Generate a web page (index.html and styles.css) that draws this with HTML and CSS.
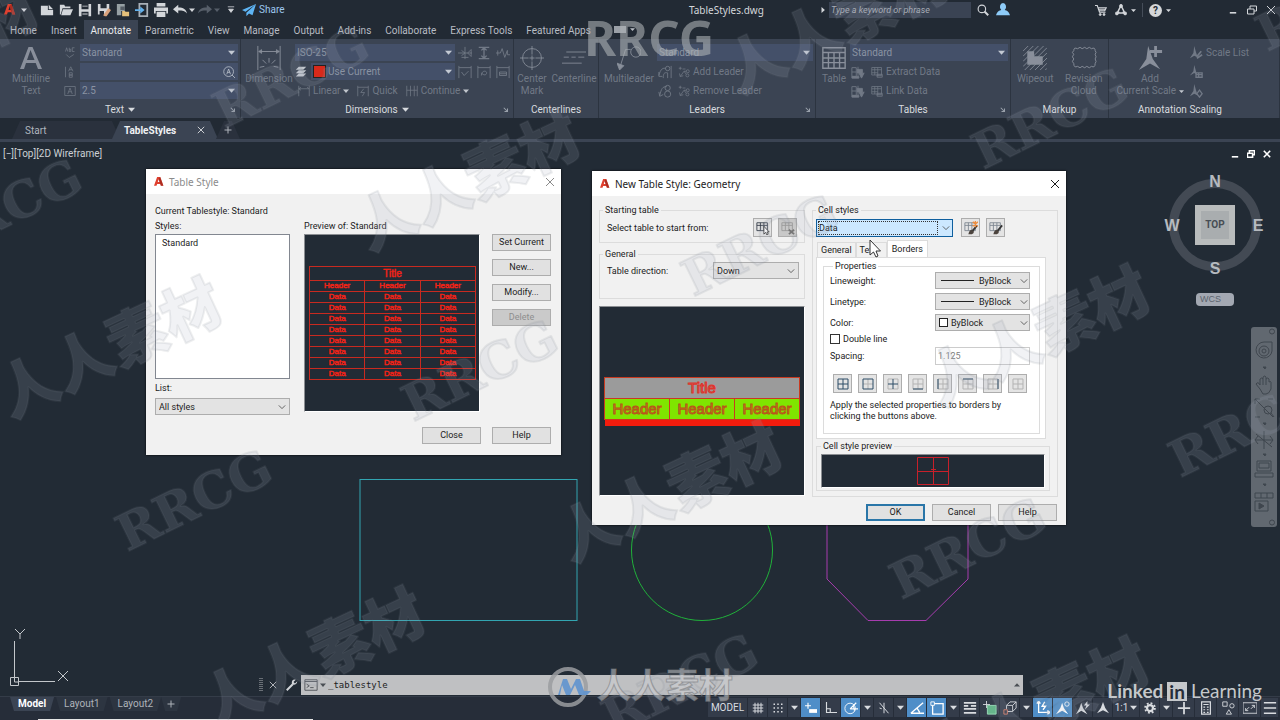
FILE: index.html
```html
<!DOCTYPE html>
<html lang="en">
<head>
<meta charset="utf-8">
<title>TableStyles.dwg</title>
<link rel="stylesheet" href="styles.css">
</head>
<body>
<svg class="sprite" aria-hidden="true">
  <symbol id="caret" viewBox="0 0 8 8"><path d="M0 2h8L4 6.500z" fill="currentColor" stroke="none"/></symbol>
  <symbol id="chev" viewBox="0 0 10 10"><path d="M1 3l4 4 4-4"/></symbol>
  <symbol id="launch" viewBox="0 0 8 8"><path d="M1 1l5 5M6 2v4H2" stroke-width="1.4"/></symbol>
  <symbol id="close" viewBox="0 0 10 10"><path d="M1 1l8 8M9 1L1 9"/></symbol>
  <symbol id="plus" viewBox="0 0 16 16"><path d="M8 1v14M1 8h14" stroke-width="2"/></symbol>
  <symbol id="alogo" viewBox="0 0 16 16"><path d="M5 0h5l5 14h-4l-1-3H5l-1 3H0zM7.500 3L6 8h3z" fill="#e0402f" stroke="none" fill-rule="evenodd"/><path d="M10 0l5 14h-4L7 3z" fill="#8e2018" stroke="none" opacity=".6"/></symbol>
  <symbol id="new" viewBox="0 0 16 16"><path d="M1 3h8v5h6v6H1zM10 2l5 5h-5z" fill="currentColor" stroke="none"/></symbol>
  <symbol id="open" viewBox="0 0 16 16"><path d="M1 2h5l1 2h6v2H4l-2 7H1zM4.500 7H16l-3 7H2.500z" fill="currentColor" stroke="none"/></symbol>
  <symbol id="save" viewBox="0 0 16 16"><path d="M1 1h14v14H1zM4 1v6h8V1zM4 10v5h8v-5zM5 3h6v1H5zM5 12h6v1H5z" fill="currentColor" fill-rule="evenodd" stroke="none"/></symbol>
  <symbol id="saveas" viewBox="0 0 16 16"><path d="M1 1h13v6l-5 6H1zM4 1v5h7V1zM3 9v4h5V9z" fill="currentColor" fill-rule="evenodd" stroke="none"/><path d="M9 15l-2-1 6-8 3 2-5 7z" fill="#d9a27c" stroke="none"/></symbol>
  <symbol id="webopen" viewBox="0 0 16 16"><path d="M1 1h9v8H6v5H1z" fill="#96a0a4" stroke="none"/><path d="M5 4h5v4H5z" fill="#555d66" stroke="none"/><path d="M7 9h3l1 1h4v5H7z" fill="#e5c07b" stroke="none"/></symbol>
  <symbol id="websave" viewBox="0 0 16 16"><path d="M5 1h9v14H5z" stroke="#a8b0b8" stroke-width="2"/><path d="M0 7h6V4l5 4-5 4V9H0z" fill="#63b1ec" stroke="none"/></symbol>
  <symbol id="print" viewBox="0 0 16 16"><path d="M3 0h10v4H3zM0 5h16v7h-2V9H2v3H0zM3 10h10v6H3z" fill="currentColor" stroke="none"/></symbol>
  <symbol id="undo" viewBox="0 0 16 16"><path d="M0 7l6-5v3c6 0 9 2 10 7-2-3-5-3.500-10-3.500V12z" fill="currentColor" stroke="none"/></symbol>
  <symbol id="redo" viewBox="0 0 16 16"><path d="M16 7l-6-5v3C4 5 1 7 0 12c2-3 5-3.500 10-3.500V12z" fill="currentColor" stroke="none"/></symbol>
  <symbol id="more" viewBox="0 0 8 10"><path d="M0 1h8M1 4h6L4 8z" fill="currentColor"/></symbol>
  <symbol id="plane" viewBox="0 0 16 16"><path d="M16 1L0 8l4 2zM16 1L5 11v4l3-3 4 2z" fill="#5eb5f5" stroke="none"/></symbol>
  <symbol id="search" viewBox="0 0 16 16"><circle cx="6.500" cy="6.500" r="5" stroke-width="1.500"/><path d="M10 10l5 5" stroke-width="2.500"/></symbol>
  <symbol id="user" viewBox="0 0 16 16"><path d="M8 0a4 4.500 0 0 1 2 8c4 1 5 3 6 6H0c1-3 2-5 6-6A4 4.500 0 0 1 8 0z" fill="#8ecbf7" stroke="none"/></symbol>
  <symbol id="cart" viewBox="0 0 16 16"><path d="M0 2h3l3 9h8M4 5h11l-2 4H5.500M5 7h9" stroke-width="1.500"/><circle cx="7" cy="14" r="1.400" fill="currentColor"/><circle cx="12" cy="14" r="1.400" fill="currentColor"/></symbol>
  <symbol id="tri" viewBox="0 0 16 16"><path d="M8 2l5 10H3zM8 2v3M3 12l3-1M13 12l-3-1" stroke-width="2"/><circle cx="8" cy="2.500" r="2" fill="currentColor"/><circle cx="2.500" cy="12.500" r="2" fill="currentColor"/><circle cx="13.500" cy="12.500" r="2" fill="currentColor"/></symbol>
  <symbol id="min" viewBox="0 0 10 10"><path d="M1 8.500h8" stroke-width="2"/></symbol>
  <symbol id="restore" viewBox="0 0 10 10"><path d="M.5 4h6.500v5H.5zM3 4V1h6.500v5H7"/></symbol>
  <symbol id="bigA" viewBox="0 0 24 24"><path d="M1 23L9.500 1h4L23 23h-4l-2.300-6H7L5 23zM8 14h7.500L11.500 4z" fill="currentColor" fill-rule="evenodd" stroke="none"/></symbol>
  <symbol id="check" viewBox="0 0 16 16"><path d="M2 6l1.500-5L5 6M7 1v5h2V3H7M14 1h-3v5h3M3 10l4 4 6-4"/></symbol>
  <symbol id="ab" viewBox="0 0 16 16"><path d="M2 1v14M6 7l3-6 3 6M7 5h4M7 9v6h4v-3H7h4V9z"/></symbol>
  <symbol id="abox" viewBox="0 0 16 16"><path d="M1 2h14v12H1zM5 12l3-8 3 8M6 9h4"/></symbol>
  <symbol id="finda" viewBox="0 0 16 16"><circle cx="7.500" cy="7.500" r="6.500"/><path d="M12 12l4 4M5 11l2.500-7 2.500 7M6 8.500h3"/></symbol>
  <symbol id="dim" viewBox="0 0 28 28"><path d="M2 1v26M26 1v26M3 7h22M3 7l3-2v4zM25 7l-3-2v4zM14 14v5M7 16l4 4M21 16l-4 4M4 24l5-1M24 24l-5-1"/></symbol>
  <symbol id="layers" viewBox="0 0 16 16"><path d="M5 1h10l-4 4H1zM5 5.500h10l-4 4H1zM5 10h10l-4 4H1z" fill="currentColor" stroke="none"/></symbol>
  <symbol id="d1" viewBox="0 0 16 16"><path d="M8 1v14M0 8h16M4 5l4 3-4 3M15 4v8l-4-4zM4 13h8"/></symbol>
  <symbol id="d2" viewBox="0 0 16 16"><path d="M2 1.500h12M2 14.500h12M8 3v10M5 5l3-3 3 3M5 11l3 3 3-3" stroke-width="1.500"/></symbol>
  <symbol id="d3" viewBox="0 0 16 16"><path d="M0 8h5l2-5 3 10 3-8v5h3M2 5v6"/></symbol>
  <symbol id="d4" viewBox="0 0 16 16"><path d="M1 1v14M15 1v14M1 3h14M4 8l3 4 5-5"/></symbol>
  <symbol id="d5" viewBox="0 0 16 16"><path d="M1 1v14M15 1v14M1 3h14M5 12c0-6 6-6 6-3s-4 3-6 0"/></symbol>
  <symbol id="d6" viewBox="0 0 16 16"><path d="M1 1v14M15 1v14M1 3h14M4 8h8v4H4zM4 10h8"/></symbol>
  <symbol id="lin" viewBox="0 0 16 16"><path d="M1 1v14M15 1v14M1 5h14M1 5l3-2M1 5l3 2M15 5l-3-2"/></symbol>
  <symbol id="cont" viewBox="0 0 16 16"><path d="M1 1v14M6 1v14M11 1v14M15 1v14M1 7h14"/></symbol>
  <symbol id="quick" viewBox="0 0 16 16"><path d="M1 1v14M15 1v14M1 3h14M9 5l-4 5h5l-3 5"/></symbol>
  <symbol id="cmark" viewBox="0 0 28 28"><circle cx="14" cy="14" r="11"/><path d="M14 0v10M14 18v10M0 14h10M18 14h10M11 14h6M14 11v6"/></symbol>
  <symbol id="cline" viewBox="0 0 28 28"><path d="M5 7h23M0 20h23M2 13h6M11 13h5M19 13h7"/></symbol>
  <symbol id="mlead" viewBox="0 0 28 28"><circle cx="22" cy="7" r="6"/><path d="M16 4H10L4 23"/><path d="M0 20l3 8 5-5z" fill="currentColor"/></symbol>
  <symbol id="ml1" viewBox="0 0 16 16"><path d="M1 12C3 4 6 3 9 4M1 8v5h4M15 1v14M6 15c0-5 1-7 5-6v6"/><circle cx="11" cy="4" r="2.500"/></symbol>
  <symbol id="ml2" viewBox="0 0 16 16"><path d="M2 13C4 5 5 3 10 3M1 9l1 5 4-2"/><circle cx="11" cy="4.500" r="3"/><circle cx="11" cy="11.500" r="3.500"/></symbol>
  <symbol id="ml3" viewBox="0 0 16 16"><path d="M1 3h4M3 1v4M3 14L8 7h3M8 7l3 4M6 4h4M2 10l1 4 4-1"/><circle cx="13" cy="7" r="2"/><circle cx="12.500" cy="12.500" r="2"/></symbol>
  <symbol id="table" viewBox="0 0 28 28"><path d="M2 3h24v22H2zM2 8h24M2 14h24M2 19h24M8 8v17M14 8v17M20 8v17" stroke-width="1.500"/></symbol>
  <symbol id="t1" viewBox="0 0 16 16"><path d="M1 3h5v10H1zM1 8h5M8 2v11" /><path d="M7 5h6v5l2-1-3 6-3-6H7zM1 13h8v2H1z" fill="currentColor"/></symbol>
  <symbol id="t2" viewBox="0 0 16 16"><path d="M1 2h13v10H1zM1 5h13M1 9h8M5 2v10M9 2v12M8 11h7v4H8zM8 13h7"/></symbol>
  <symbol id="wipe" viewBox="0 0 28 28"><path d="M0 6l6-6M0 12L12 0M0 18L18 0M0 24L24 0M2 28L28 2M8 28L28 8M14 28l14-14M20 28l8-8M26 28l2-2"/><path d="M5 6h8v6h10v10H5z" fill="#a3a9b3" stroke="none"/></symbol>
  <symbol id="cloud" viewBox="0 0 28 28"><path d="M3 6q0-4 4-2 3-3 5 0 3-3 5 0 3-3 5 0 4-2 4 2 2 2 0 4 2 3 0 5 2 3 0 5 0 5-4 3-2 3-5 0-2 3-5 0-2 3-5 0-4 2-4-3-3-2 0-5-3-2 0-5-3-2 0-4z"/></symbol>
  <symbol id="scale" viewBox="0 0 28 28"><path d="M12 1l5 14 8 11-11-6-12 7 8-12z" fill="currentColor" stroke="none"/><path d="M20 1v12M14 7h13" stroke-width="3"/></symbol>
  <symbol id="sc" viewBox="0 0 16 16"><path d="M6 0l2 7 2 6-4-2-5 3 4-6z" fill="currentColor" stroke="none"/><path d="M9 12l5-6M9 14l6-4" stroke-width="2"/></symbol>
  <symbol id="sc2" viewBox="0 0 16 16"><path d="M6 0l2 7 1 4-3-2-5 3 4-5z" fill="currentColor" stroke="none"/><path d="M8 9h7v5H8zM8 11h7M11 9v5" stroke-width="1.500"/></symbol>
  <symbol id="sc3" viewBox="0 0 16 16"><path d="M6 0l2 7 2 6-4-2-5 3 4-6z" fill="currentColor" stroke="none"/><path d="M12 7l3 4-3 4-3-4z" stroke-width="1.500"/></symbol>
  <symbol id="person" viewBox="0 0 16 16"><path d="M8 0l3 8 5 7-8-4-8 4 5-7z" fill="currentColor" stroke="none"/></symbol>
  <symbol id="personc" viewBox="0 0 16 16"><path d="M7 2l2 6 5 7-7-4-7 4 5-7z" fill="currentColor" stroke="none"/><circle cx="12.500" cy="3.500" r="2.500"/></symbol>
  <symbol id="personb" viewBox="0 0 16 16"><path d="M6 2l2 6 5 7-7-4-6 4 4-7zM13 0L9 5h3l-2 5 6-6h-3z" fill="currentColor" stroke="none"/></symbol>
  <symbol id="grid" viewBox="0 0 16 16"><path d="M4 1v14M8 1v14M12 1v14M1 4h14M1 8h14M1 12h14" stroke-width="1.300"/></symbol>
  <symbol id="dots" viewBox="0 0 16 16"><path d="M2 3h12M2 8h12M2 13h12" stroke-width="2" stroke-dasharray="2 3"/></symbol>
  <symbol id="dyn" viewBox="0 0 16 16"><path d="M4 1v8M0 5h8" stroke-width="1.500"/><path d="M6 10h10v4H6z" fill="currentColor"/></symbol>
  <symbol id="ortho" viewBox="0 0 16 16"><path d="M2 0v14h14M2 9h5v5" stroke-width="1.500"/></symbol>
  <symbol id="polar" viewBox="0 0 16 16"><circle cx="7" cy="8.500" r="6"/><path d="M7 9h9M7 9l7-7M11 6l1 5" stroke-width="1.400"/></symbol>
  <symbol id="iso" viewBox="0 0 16 16"><path d="M2 1l12 14M8 1v14M2 8l3 1" stroke-width="1.300"/></symbol>
  <symbol id="track" viewBox="0 0 16 16"><path d="M1 14L15 2M1 14h15M8 8l3 5" stroke-width="1.600"/></symbol>
  <symbol id="osnap" viewBox="0 0 16 16"><path d="M3 3h12v12H3z" stroke-width="1.500"/><path d="M1 1h4v4H1z" fill="#4f8ec8"/></symbol>
  <symbol id="lw" viewBox="0 0 16 16"><path d="M1 2h14M1 5.500h5M9 5.500h6M1 9h14M1 13.500h14" stroke-width="2"/></symbol>
  <symbol id="trans" viewBox="0 0 16 16"><path d="M4 0v8M0 4h8"/><path d="M5 5h10v10H5z" fill="#66b58b" stroke="#9fe0bd"/></symbol>
  <symbol id="cube" viewBox="0 0 16 16"><path d="M4 5l4-4h7v7l-4 4H5M4 5h7v7M11 5l4-4M4 5v4"/><path d="M1 10h4v5H1z" stroke="#e08068"/></symbol>
  <symbol id="ucs" viewBox="0 0 16 16"><path d="M3 1v12h13M1 3l2-3 2 3M13 11l3 2-3 2M10 1L7 6h4l-3 4" stroke-width="1.500"/></symbol>
  <symbol id="gear" viewBox="0 0 16 16"><circle cx="8" cy="8" r="4" stroke-width="3"/><circle cx="8" cy="8" r="6.500" stroke-width="2.500" stroke-dasharray="2.500 2.600"/></symbol>
  <symbol id="calc" viewBox="0 0 16 16"><path d="M3 1h10v14H3zM5 4h6M5 7h2M9 7h2M5 10h2M9 10h2M5 13h2M9 13h2" stroke-width="1.400"/></symbol>
  <symbol id="shapes" viewBox="0 0 16 16"><path d="M2 1h5v5H2zM6 15l3-5 3 5z"/><circle cx="12.500" cy="5.500" r="2.500"/></symbol>
  <symbol id="full" viewBox="0 0 16 16"><path d="M0 2h16v12H0zM3 11l4-4M3 8v3h3M13 5L9 9M13 8V5h-3"/></symbol>
  <symbol id="menu" viewBox="0 0 16 16"><path d="M1 2h14M1 8h14M1 14h14" stroke-width="1.600"/></symbol>
  <symbol id="wrench" viewBox="0 0 16 16"><path d="M1 15l8-8" stroke-width="2.500"/><path d="M13 1c-4-1-6 2-5 6 3 2 7 0 7-4l-3 3-2-2z" fill="currentColor" stroke="none"/></symbol>
  <symbol id="cmd" viewBox="0 0 16 14"><path d="M1 1h14v12H1zM1 3h14M3 6l3 2-3 2M7 10h4"/></symbol>
  <symbol id="pick" viewBox="0 0 16 16"><path d="M1 2h12v9H1zM1 5h12M5 2v9M9 2v9" stroke="#333c48"/><path d="M9 6v9l2-2 1.500 3 1.500-1-1.500-2.500H15z" fill="#fff" stroke="#333"/></symbol>
  <symbol id="unpick" viewBox="0 0 16 16"><path d="M1 2h12v9H1zM1 5h12M5 2v9M9 2v9" stroke="#999"/><path d="M9 10l6 5M15 10l-6 5" stroke="#777" stroke-width="2"/></symbol>
  <symbol id="brush" viewBox="0 0 16 16"><path d="M1 2h12v9H1zM1 5h12M5 2v9M9 2v9" stroke="#7b858f"/><path d="M5 15c1-5 4-6 6-4 1 3-2 5-6 4z" fill="#4c443e" stroke="none"/><path d="M10 11l5-6" stroke="#333" stroke-width="2"/></symbol>
  <symbol id="star" viewBox="0 0 16 16"><path d="M13 0v7M10 1l6 5M16 1l-6 5" stroke="#ef8d3c" stroke-width="1.500"/></symbol>
</svg>

<header class="titlebar">
  <div class="quick">
    <button class="ib app" aria-label="Application menu"><svg class="i12"><use href="#alogo"/></svg><svg class="i6"><use href="#caret"/></svg></button>
    <button class="ib" aria-label="New"><svg class="i14"><use href="#new"/></svg></button>
    <button class="ib" aria-label="Open"><svg class="i14"><use href="#open"/></svg></button>
    <button class="ib" aria-label="Save"><svg class="i14"><use href="#save"/></svg></button>
    <button class="ib" aria-label="Save as"><svg class="i14"><use href="#saveas"/></svg></button>
    <button class="ib" aria-label="Open from web"><svg class="i14"><use href="#webopen"/></svg></button>
    <button class="ib" aria-label="Save to web"><svg class="i14"><use href="#websave"/></svg></button>
    <button class="ib" aria-label="Plot"><svg class="i14"><use href="#print"/></svg></button>
    <button class="ib" aria-label="Undo"><svg class="i14"><use href="#undo"/></svg></button>
    <svg class="i6"><use href="#caret"/></svg>
    <button class="ib dim" aria-label="Redo"><svg class="i14"><use href="#redo"/></svg></button>
    <svg class="i6 dim"><use href="#caret"/></svg>
    <button class="ib small" aria-label="Customize"><svg class="i8"><use href="#more"/></svg></button>
    <a class="share" href="#"><svg class="i14"><use href="#plane"/></svg>Share</a>
  </div>
  <h1 class="doc">TableStyles.dwg</h1>
  <div class="info">
    <svg class="i6 right"><use href="#caret"/></svg>
    <input class="keyword" type="text" placeholder="Type a keyword or phrase" aria-label="Search">
    <button class="ib" aria-label="Search"><svg class="i12"><use href="#search"/></svg></button>
    <button class="ib" aria-label="Sign in"><svg class="i14"><use href="#user"/></svg></button>
    <span class="grow"></span>
    <button class="ib" aria-label="Store"><svg class="i12"><use href="#cart"/></svg></button>
    <button class="ib" aria-label="Apps"><svg class="i12"><use href="#tri"/></svg></button>
    <svg class="i5"><use href="#caret"/></svg>
    <span class="bar"></span>
    <button class="help" aria-label="Help">?</button>
    <svg class="i5"><use href="#caret"/></svg>
    <div class="winctl"><button class="ib" aria-label="Minimize"><svg class="i8"><use href="#min"/></svg></button><button class="ib" aria-label="Restore"><svg class="i10"><use href="#restore"/></svg></button><button class="ib" aria-label="Close"><svg class="i10"><use href="#close"/></svg></button></div>
  </div>
</header>

<nav class="tabs">
  <a href="#">Home</a><a href="#">Insert</a><a href="#" class="on">Annotate</a><a href="#">Parametric</a><a href="#">View</a><a href="#">Manage</a><a href="#">Output</a><a href="#">Add-ins</a><a href="#">Collaborate</a><a href="#">Express Tools</a><a href="#">Featured Apps</a><span class="toggle"></span><svg class="i5"><use href="#caret"/></svg>
</nav>

<section class="ribbon">
  <div class="panel">
    <div class="pbody p-text">
      <button class="big"><svg class="i24"><use href="#bigA"/></svg><span>Multiline<br>Text</span></button>
      <div class="stack narrow"><svg class="i12"><use href="#check"/></svg><svg class="i12"><use href="#ab"/></svg><svg class="i12"><use href="#abox"/></svg></div>
      <div class="stack">
        <span class="combo"><select aria-label="Text style"><option>Standard</option></select><svg class="i7"><use href="#caret"/></svg></span>
        <span class="combo"><input type="text" aria-label="Find text"><svg class="i12"><use href="#finda"/></svg></span>
        <span class="combo"><select aria-label="Text height"><option>2.5</option></select><svg class="i7"><use href="#caret"/></svg></span>
      </div>
    </div>
    <div class="ptitle"><span>Text <svg class="i7"><use href="#caret"/></svg></span><svg class="i6 la"><use href="#launch"/></svg></div>
  </div>
  <div class="panel">
    <div class="pbody p-dim">
      <button class="big"><svg class="i28"><use href="#dim"/></svg><span>Dimension</span></button>
      <div class="dimgrid">
        <span class="combo"><select aria-label="Dimension style"><option>ISO-25</option></select><svg class="i7"><use href="#caret"/></svg></span>
        <div class="tri"><svg class="i14"><use href="#d1"/></svg><svg class="i14"><use href="#d2"/></svg><svg class="i14"><use href="#d3"/></svg></div>
        <div class="layer"><svg class="i12 lit"><use href="#layers"/></svg><span class="combo grow"><i class="swatch"></i><select aria-label="Layer"><option>Use Current</option></select><svg class="i7"><use href="#caret"/></svg></span></div>
        <div class="tri"><svg class="i14"><use href="#d4"/></svg><svg class="i14"><use href="#d5"/></svg><svg class="i14"><use href="#d6"/></svg></div>
        <div class="cmds wide"><button class="cmd"><svg class="i12"><use href="#lin"/></svg>Linear <svg class="i6 lit"><use href="#caret"/></svg></button><button class="cmd"><svg class="i12"><use href="#quick"/></svg>Quick</button><button class="cmd"><svg class="i12"><use href="#cont"/></svg>Continue <svg class="i6 lit"><use href="#caret"/></svg></button></div>
      </div>
    </div>
    <div class="ptitle"><span>Dimensions <svg class="i7"><use href="#caret"/></svg></span><svg class="i6 la"><use href="#launch"/></svg></div>
  </div>
  <div class="panel">
    <div class="pbody p-pair tight">
      <button class="big"><svg class="i24"><use href="#cmark"/></svg><span>Center<br>Mark</span></button>
      <button class="big"><svg class="i24"><use href="#cline"/></svg><span>Centerline</span></button>
    </div>
    <div class="ptitle"><span>Centerlines</span></div>
  </div>
  <div class="panel">
    <div class="pbody p-lead">
      <button class="big"><svg class="i24"><use href="#mlead"/></svg><span>Multileader</span></button>
      <div class="stack">
        <span class="combo"><select aria-label="Leader style"><option>Standard</option></select><svg class="i7"><use href="#caret"/></svg></span>
        <div class="cmds"><svg class="i14"><use href="#ml1"/></svg><button class="cmd"><svg class="i12"><use href="#ml3"/></svg>Add Leader</button></div>
        <div class="cmds"><svg class="i14"><use href="#ml2"/></svg><button class="cmd"><svg class="i12"><use href="#ml3"/></svg>Remove Leader</button></div>
      </div>
    </div>
    <div class="ptitle"><span>Leaders</span><svg class="i6 la"><use href="#launch"/></svg></div>
  </div>
  <div class="panel">
    <div class="pbody p-tab">
      <button class="big"><svg class="i28"><use href="#table"/></svg><span>Table</span></button>
      <div class="stack">
        <span class="combo"><select aria-label="Table style"><option>Standard</option></select><svg class="i7"><use href="#caret"/></svg></span>
        <div class="cmds"><svg class="i14"><use href="#t1"/></svg><button class="cmd"><svg class="i12"><use href="#t2"/></svg>Extract Data</button></div>
        <div class="cmds"><svg class="i14"><use href="#t1"/></svg><button class="cmd"><svg class="i12"><use href="#t2"/></svg>Link Data</button></div>
      </div>
    </div>
    <div class="ptitle"><span>Tables</span><svg class="i6 la"><use href="#launch"/></svg></div>
  </div>
  <div class="panel">
    <div class="pbody p-pair">
      <button class="big"><svg class="i24"><use href="#wipe"/></svg><span>Wipeout</span></button>
      <button class="big"><svg class="i28"><use href="#cloud"/></svg><span>Revision<br>Cloud</span></button>
    </div>
    <div class="ptitle"><span>Markup</span></div>
  </div>
  <div class="panel">
    <div class="pbody p-scale">
      <button class="big"><svg class="i28"><use href="#scale"/></svg><span>Add<br>Current Scale <svg class="i5 lit"><use href="#caret"/></svg></span></button>
      <div class="stack">
        <button class="cmd"><svg class="i14"><use href="#sc"/></svg>Scale List</button>
        <button class="cmd" aria-label="Delete scales"><svg class="i14"><use href="#sc2"/></svg></button>
        <button class="cmd" aria-label="Sync scales"><svg class="i14"><use href="#sc3"/></svg></button>
      </div>
    </div>
    <div class="ptitle shift"><span>Annotation Scaling</span></div>
  </div>
</section>

<nav class="files">
  <a href="#" class="file">Start</a>
  <a href="#" class="file on">TableStyles <svg class="i8"><use href="#close"/></svg></a>
  <button class="file add" aria-label="New drawing"><svg class="i8"><use href="#plus"/></svg></button>
</nav>

<main class="canvas">
  <svg class="drawing" viewBox="0 142 1280 554" aria-hidden="true">
    <rect x="360" y="479.500" width="217" height="141" stroke="#32a5b1"/>
    <circle cx="702" cy="550" r="70.500" stroke="#20b13a"/>
    <path d="M868 479h58l42 42v58l-42 41.500h-58L827 579v-58z" stroke="#a63cae"/>
    <path d="M14.500 641v36M18 681.500h37M10.500 677.500h8v8h-8zM14.500 677v5h4M15 629l5 5 5-5M20 634v5M58 671l10 10M68 671l-10 10" stroke="#c3c7cb"/>
  </svg>
  <div class="viewrow"><span>[−][Top][2D Wireframe]</span><div class="winctl"><button class="ib" aria-label="Minimize view"><svg class="i8"><use href="#min"/></svg></button><button class="ib" aria-label="Restore view"><svg class="i8"><use href="#restore"/></svg></button><button class="ib" aria-label="Close view"><svg class="i8"><use href="#close"/></svg></button></div></div>

  <div class="viewcube"><b class="n">N</b><b class="w">W</b><button class="top">TOP</button><b class="e">E</b><b class="s">S</b></div>
  <button class="wcs">WCS</button>
  <svg class="navbar" viewBox="0 0 26 200" aria-hidden="true">
    <rect width="26" height="200" rx="3" fill="#616870" stroke="none"/>
    <circle cx="21" cy="4.500" r="2.500"/><circle cx="21" cy="195.500" r="2.500"/>
    <path d="M13 15h8v9a8 8 0 1 1-8-9z"/><circle cx="13" cy="24" r="5"/><circle cx="13" cy="24" r="2"/>
    <path d="M9 62l-4-5q2-3 4 1v-6q2-2 3 0v-2q2-2 3 0v2q2-2 3 0v3q2-1 2 0v7q-2 5-5 5h-3zM12 52v6M15 52v6M4 72l18 18M4 72h5M4 72v5M22 72h-5M4 90h5"/><circle cx="17" cy="83" r="4"/><path d="M20 86l3 4M13 104v18M4 113h18M7 109l-3 4 3 4M19 109l3 4-3 4M5 107l16 13M6 134h14v10H6zM8 136h10v5H8zM4 146h18v4H4zM4 166h18v5H4zM10 166v5M16 166v5M4 174h13v10H4z"/>
    <path d="M8 176l5 3-5 3zM12 40h3l-1 2zM12 96h3l-1 2zM12 127h3l-1 2zM12 157h3l-1 2z" fill="#3f464e"/>
  </svg>

  <section class="dialog styles" aria-labelledby="d1t">
    <header class="dtitle muted"><svg class="i12"><use href="#alogo"/></svg><h2 id="d1t">Table Style</h2><button class="ib" aria-label="Close dialog"><svg class="i10"><use href="#close"/></svg></button></header>
    <div class="sbody">
      <p class="line full">Current Tablestyle: Standard</p>
      <p class="line">Styles:</p><p class="line span2">Preview of: Standard</p>
      <div class="leftcol">
        <ul class="listbox"><li>Standard</li></ul>
        <label class="line" for="list">List:</label>
        <span class="sel"><select id="list"><option>All styles</option></select><svg class="i8"><use href="#chev"/></svg></span>
      </div>
      <div class="preview">
        <table class="mini">
          <tr><th class="t" colspan="3">Title</th></tr>
          <tr><th>Header</th><th>Header</th><th>Header</th></tr>
          <tr><td>Data</td><td>Data</td><td>Data</td></tr><tr><td>Data</td><td>Data</td><td>Data</td></tr>
          <tr><td>Data</td><td>Data</td><td>Data</td></tr><tr><td>Data</td><td>Data</td><td>Data</td></tr>
          <tr><td>Data</td><td>Data</td><td>Data</td></tr><tr><td>Data</td><td>Data</td><td>Data</td></tr>
          <tr><td>Data</td><td>Data</td><td>Data</td></tr><tr><td>Data</td><td>Data</td><td>Data</td></tr>
        </table>
      </div>
      <div class="btncol"><button class="btn">Set Current</button><button class="btn">New...</button><button class="btn">Modify...</button><button class="btn" disabled>Delete</button></div>
      <div class="sfoot"><button class="btn">Close</button><button class="btn">Help</button></div>
    </div>
  </section>

  <section class="dialog newstyle" aria-labelledby="d2t">
    <header class="dtitle"><svg class="i12"><use href="#alogo"/></svg><h2 id="d2t">New Table Style: Geometry</h2><button class="ib" aria-label="Close dialog"><svg class="i10"><use href="#close"/></svg></button></header>
    <div class="nbody">
      <div class="ncol">
        <fieldset class="starting"><legend>Starting table</legend>
          <div class="row"><span class="grow">Select table to start from:</span><button class="sq" aria-label="Select table"><svg class="i14"><use href="#pick"/></svg></button><button class="sq off" disabled aria-label="Remove table"><svg class="i14"><use href="#unpick"/></svg></button></div>
        </fieldset>
        <fieldset class="general"><legend>General</legend>
          <div class="row"><label class="grow" for="dir">Table direction:</label><span class="sel dir"><select id="dir"><option>Down</option></select><svg class="i8"><use href="#chev"/></svg></span></div>
        </fieldset>
        <div class="preview">
          <table class="maxi">
            <tr><th class="t" colspan="3">Title</th></tr>
            <tr><th>Header</th><th>Header</th><th>Header</th></tr>
            <tr><td colspan="3"></td></tr>
          </table>
        </div>
      </div>
      <fieldset class="cells"><legend>Cell styles</legend>
        <div class="row pickrow"><span class="sel focus"><select aria-label="Cell style"><option>Data</option></select><svg class="i8"><use href="#chev"/></svg></span><button class="sq" aria-label="New cell style"><svg class="i14"><use href="#brush"/><use href="#star"/></svg></button><button class="sq" aria-label="Manage cell styles"><svg class="i14"><use href="#brush"/></svg></button></div>
        <div class="dtabs" role="tablist"><button role="tab">General</button><button role="tab">Text</button><button role="tab" class="on" aria-selected="true">Borders</button></div>
        <div class="page">
          <fieldset class="props"><legend>Properties</legend>
            <div class="form">
              <label for="lw1">Lineweight:</label><span class="sel"><i class="sample"></i><select id="lw1"><option>ByBlock</option></select><svg class="i8"><use href="#chev"/></svg></span>
              <label for="lt1">Linetype:</label><span class="sel"><i class="sample"></i><select id="lt1"><option>ByBlock</option></select><svg class="i8"><use href="#chev"/></svg></span>
              <label for="co1">Color:</label><span class="sel"><i class="chip"></i><select id="co1"><option>ByBlock</option></select><svg class="i8"><use href="#chev"/></svg></span>
            </div>
            <label class="checkrow"><input type="checkbox">Double line</label>
            <div class="form"><label for="sp">Spacing:</label><input id="sp" class="num" type="text" value="1.125" disabled></div>
            <div class="borders">
              <button class="sq" aria-label="All borders"><svg class="b" viewBox="0 0 12 12"><path d="M1 1h10v10H1zM6 1v10M1 6h10" stroke="#2d4c66"/></svg></button>
              <button class="sq" aria-label="Outside borders"><svg class="b" viewBox="0 0 12 12"><path class="g" d="M6 1v10M1 6h10"/><path d="M1 1h10v10H1z" stroke="#2d4c66"/></svg></button>
              <button class="sq" aria-label="Inside borders"><svg class="b" viewBox="0 0 12 12"><path class="g" d="M1 1h10v10H1z"/><path d="M6 1v10M1 6h10" stroke="#2d4c66"/></svg></button>
              <button class="sq" aria-label="Bottom border"><svg class="b" viewBox="0 0 12 12"><path class="g" d="M1 1h10v10H1zM6 1v10M1 6h10"/><path d="M1 11h10" stroke="#2d4c66"/></svg></button>
              <button class="sq" aria-label="Left border"><svg class="b" viewBox="0 0 12 12"><path class="g" d="M1 1h10v10H1zM6 1v10M1 6h10"/><path d="M1 1v10" stroke="#2d4c66"/></svg></button>
              <button class="sq" aria-label="Top border"><svg class="b" viewBox="0 0 12 12"><path class="g" d="M1 1h10v10H1zM6 1v10M1 6h10"/><path d="M1 1h10" stroke="#2d4c66"/></svg></button>
              <button class="sq" aria-label="Right border"><svg class="b" viewBox="0 0 12 12"><path class="g" d="M1 1h10v10H1zM6 1v10M1 6h10"/><path d="M11 1v10" stroke="#2d4c66"/></svg></button>
              <button class="sq" aria-label="No borders"><svg class="b" viewBox="0 0 12 12"><path class="g" d="M1 1h10v10H1zM6 1v10M1 6h10"/></svg></button>
            </div>
            <p class="hint">Apply the selected properties to borders by clicking the buttons above.</p>
          </fieldset>
        </div>
        <fieldset class="cprev"><legend>Cell style preview</legend><div class="preview"><svg class="cellpic" viewBox="0 0 32 28"><path d="M.5.5h31v27H.5zM16.500 1v26M1 14.500h30M14 12.500h5" stroke="#c8202a"/></svg></div></fieldset>
      </fieldset>
    </div>
    <footer class="nfoot"><button class="btn primary">OK</button><button class="btn">Cancel</button><button class="btn">Help</button></footer>
  </section>

  <div class="cmdline">
    <svg class="grip" viewBox="0 0 4 14"><path d="M1 0v14M3 0v14" stroke-dasharray="1 1"/></svg>
    <button class="ib" aria-label="Close command line"><svg class="i8"><use href="#close"/></svg></button>
    <button class="ib" aria-label="Customize command line"><svg class="i12"><use href="#wrench"/></svg></button>
    <label class="cmdbox"><svg class="i14"><use href="#cmd"/></svg><svg class="i6"><use href="#caret"/></svg><input type="text" value="_tablestyle" aria-label="Command"><svg class="i6 up"><use href="#caret"/></svg></label>
  </div>
</main>

<footer class="status">
  <nav class="layouts"><a href="#" class="on">Model</a><a href="#">Layout1</a><a href="#">Layout2</a><a href="#" class="add" aria-label="New layout"><svg class="i8"><use href="#plus"/></svg></a></nav>
  <div class="tools">
    <button class="model">MODEL</button>
    <button aria-label="Grid"><svg class="i12"><use href="#grid"/></svg></button>
    <button aria-label="Snap"><svg class="i12"><use href="#dots"/></svg></button>
    <button class="c" aria-label="Snap options"><svg class="i7"><use href="#caret"/></svg></button>
    <button class="act" aria-label="Dynamic input"><svg class="i12"><use href="#dyn"/></svg></button>
    <button aria-label="Ortho"><svg class="i12"><use href="#ortho"/></svg></button>
    <button class="act" aria-label="Polar"><svg class="i14"><use href="#polar"/></svg></button>
    <button class="c" aria-label="Polar options"><svg class="i7"><use href="#caret"/></svg></button>
    <button aria-label="Isodraft"><svg class="i12"><use href="#iso"/></svg></button>
    <button class="c" aria-label="Isodraft options"><svg class="i7"><use href="#caret"/></svg></button>
    <button class="act" aria-label="Tracking"><svg class="i14"><use href="#track"/></svg></button>
    <button class="act" aria-label="Object snap"><svg class="i14"><use href="#osnap"/></svg></button>
    <button class="c" aria-label="Object snap options"><svg class="i7"><use href="#caret"/></svg></button>
    <button aria-label="Lineweight"><svg class="i14"><use href="#lw"/></svg></button>
    <button aria-label="Transparency"><svg class="i14"><use href="#trans"/></svg></button>
    <button aria-label="3D snap"><svg class="i14"><use href="#cube"/></svg></button>
    <button class="c" aria-label="3D snap options"><svg class="i7"><use href="#caret"/></svg></button>
    <button class="act" aria-label="Dynamic UCS"><svg class="i14"><use href="#ucs"/></svg></button>
    <button class="act" aria-label="Annotation visibility"><svg class="i14"><use href="#personc"/></svg></button>
    <button aria-label="Autoscale"><svg class="i14"><use href="#personb"/></svg></button>
    <button aria-label="Annotation scale"><svg class="i12"><use href="#person"/></svg></button>
    <button class="ratio">1:1<svg class="i7"><use href="#caret"/></svg></button>
    <button aria-label="Workspace"><svg class="i12"><use href="#gear"/></svg></button>
    <button class="c" aria-label="Workspace options"><svg class="i7"><use href="#caret"/></svg></button>
    <button class="w" aria-label="Annotation monitor"><svg class="i14"><use href="#plus"/></svg></button>
    <button class="w" aria-label="Quick properties"><svg class="i14"><use href="#calc"/></svg></button>
    <button class="w" aria-label="Isolate objects"><svg class="i14"><use href="#shapes"/></svg></button>
    <button class="w" aria-label="Clean screen"><svg class="i14"><use href="#full"/></svg></button>
    <button class="m" aria-label="Customize status bar"><svg class="i14"><use href="#menu"/></svg></button>
  </div>
  <i class="strip"></i>
</footer>

<svg class="marks" viewBox="0 0 1280 720" aria-hidden="true">
  <g class="slab">
    <text transform="translate(291 77) rotate(-26)">RRCG</text>
    <text transform="translate(1050 118) rotate(-26)">RRCG</text>
    <text transform="translate(4 209) rotate(-26)">RRCG</text>
    <text transform="translate(760 245) rotate(-26)">RRCG</text>
    <text transform="translate(480 370) rotate(-26)">RRCG</text>
    <text transform="translate(194 500) rotate(-26)">RRCG</text>
    <text transform="translate(968 548) rotate(-26)">RRCG</text>
    <text transform="translate(1247 426) rotate(-26)">RRCG</text>
    <text transform="translate(680 684) rotate(-26)">RRCG</text>
    <text transform="translate(1334 0) rotate(-26)">RRCG</text>
  </g>
  <g class="han">
    <text transform="translate(466 177) rotate(-25)">人人素材</text>
    <text transform="translate(108 344) rotate(-25)">人人素材</text>
    <text transform="translate(668 488) rotate(-25)">人人素材</text>
    <text transform="translate(311 654) rotate(-25)">人人素材</text>
    <text transform="translate(1035 704) rotate(-25)">人人素材</text>
    <text transform="translate(1036 332) rotate(-25)">人人素材</text>
    <text transform="translate(835 20) rotate(-25)">人人素材</text>
    <text transform="translate(-76 48) rotate(-25)">人人素材</text>
  </g>
  <text class="topmark" x="649" y="56">RRCG</text>
  <circle cx="568" cy="687" r="18" fill="none" stroke="#9a9ca0" stroke-width="4" opacity=".85"/>
  <path d="M558 695l5-16h4l4 10 5-10h4l4 12h7l-4 4h-8l-4-10-5 10h-4l-4-10-2 10z" fill="#5f93cf" opacity=".9"/>
  <text class="botmark" x="665" y="698">人人素材</text>
  <path d="M870 240v15l3.500-3 2.500 5 2-1-2-5h4.500z" fill="#fff" stroke="#333"/>
</svg>
<div class="brand"><b>Linked</b><b class="in">in</b><span>Learning</span></div>
</body>
</html>
```
FILE: styles.css
```css
* { box-sizing: border-box; }
body {
  margin: 0; height: 100vh; display: flex; flex-direction: column; overflow: hidden; position: relative;
  background: #222a34; color: #d3d6da; font: 10px/12px Roboto, "Open Sans", sans-serif;
}
svg { fill: none; stroke: currentColor; flex: none; display: block; }
button, input, select { font: inherit; color: inherit; margin: 0; padding: 0; border: 0; background: none; border-radius: 0; min-width: 0; }
select { appearance: none; flex: 1; width: 100%; opacity: 1; }
a { color: inherit; text-decoration: none; }
h1, h2, p, ul { margin: 0; padding: 0; font-weight: normal; font-size: inherit; list-style: none; }
.sprite { position: absolute; width: 0; height: 0; }
.i5 { width: 5px; height: 5px; } .i6 { width: 6px; height: 6px; } .i7 { width: 7px; height: 7px; }
.i8 { width: 8px; height: 8px; } .i10 { width: 10px; height: 10px; } .i12 { width: 12px; height: 12px; }
.i14 { width: 14px; height: 14px; } .i24 { width: 24px; height: 24px; } .i28 { width: 26px; height: 26px; }
.grow { flex: 1; }
.ib { display: flex; align-items: center; justify-content: center; width: 19px; height: 16px; }
.dim { color: #565e69; }

.titlebar { display: grid; grid-template-columns: 689fr 131fr 460fr; height: 20px; align-items: center; }
.doc { font-family: "Noto Sans", sans-serif; }
.quick, .info, .winctl { display: flex; align-items: center; }
.app { width: 37px; justify-content: flex-start; gap: 5px; padding-left: 4px; }
.small { width: 22px; }
.share { display: flex; align-items: center; gap: 3px; color: #9cc7ee; }
.right { transform: rotate(-90deg); }
.info { gap: 1px; }
.keyword { width: 142px; height: 16px; background: #3a4353; margin: 0 1px 0 2px; padding: 0 2px; font-style: italic; font-size: 9px; }
.keyword::placeholder { color: #a8adb6; }
.bar { width: 1px; height: 14px; background: #454d59; margin: 0 5px; }
.help { width: 13px; height: 13px; border-radius: 50%; background: #d5d7d9; color: #222a34; font-weight: bold; margin-right: 3px; line-height: 13px; }
.info > .winctl { margin-left: 51px; }

.tabs { display: flex; align-items: center; height: 19px; padding-left: 3px; line-height: 22px; color: #b8bcc3; }
.tabs a { padding: 0 7px; height: 19px; }
.tabs .on { background: #3b4453; color: #e8eaed; }
.toggle { width: 12px; height: 7px; background: #9ba0a7; margin: 0 4px 0 16px; }

.ribbon { display: grid; grid-template-columns: 241fr 273fr 85fr 217fr 195fr 98fr 171fr; background: #3b4453; color: #717986; height: 79px; }
.panel { display: flex; flex-direction: column; border-right: 1px solid #2c3440; min-width: 0; }
.pbody { display: grid; flex: 1; padding: 4px 2px 0; min-width: 0; }
.p-text { grid-template-columns: 58px 20px 1fr; }
.p-dim { grid-template-columns: 52px 1fr; }
.p-pair { grid-template-columns: 1fr 1fr; padding: 4px 0 0; }
.tight { grid-template-columns: 36px 1fr; }
.p-lead { grid-template-columns: 56px 1fr; }
.p-tab { grid-template-columns: 32px 1fr; }
.p-scale { grid-template-columns: 78px 1fr; }
.big { display: flex; flex-direction: column; align-items: center; height: 57px; white-space: nowrap; min-width: 0; }
.big > svg { height: 30px; color: #a3a9b3; opacity: .75; }
.big span { line-height: 12px; }
.big span svg { display: inline-block; }
.stack { display: grid; grid-auto-rows: 19px; align-items: center; min-width: 0; justify-items: stretch; }
.narrow { justify-items: center; }
.combo { display: flex; align-items: center; height: 17px; background: #445069; padding: 0 3px 0 2px; color: #8a93a3; }
.combo > svg { color: #c3c9d3; }
.combo input { flex: 1; width: 0; }
.combo select { width: 0; }
.lit { color: #c1c6cd; }
.swatch { width: 13px; height: 13px; background: #d8291b; border: 1px solid #222; margin: 0 2px 0 0; }
.dimgrid { display: grid; grid-template-columns: 160px 1fr; grid-auto-rows: 19px; align-items: center; column-gap: 3px; }
.tri { display: flex; gap: 5px; }
.layer, .cmds, .cmd { display: flex; align-items: center; }
.layer { gap: 4px; }
.wide { grid-column: 1 / -1; gap: 8px; padding-left: 3px; }
.cmd { gap: 3px; white-space: nowrap; }
.stack .cmds { gap: 6px; padding-left: 1px; }
.ptitle { display: grid; grid-template-columns: 8px 1fr 8px; align-items: center; height: 17px; padding: 0 2px; color: #d8dbdf; }
.ptitle span { grid-column: 2; display: flex; gap: 4px; align-items: center; justify-content: center; white-space: nowrap; }
.shift { padding-right: 30px; }
.la { color: #9aa1ab; }

.files { display: flex; align-items: stretch; height: 24px; padding: 3px 0 0 12px; border-bottom: 3px solid #3b4453; line-height: 19px; color: #b0b5bd; }
.file { background: #2a313d; width: 108px; padding-left: 13px; clip-path: polygon(8px 0, calc(100% - 8px) 0, 100% 100%, 0 100%); }
.file.on { background: #3b4453; color: #f0f1f3; font-weight: bold; width: 106px; padding-left: 12px; margin-left: -8px; display: flex; align-items: center; justify-content: space-between; padding-right: 13px; }
.add { width: 24px; padding: 0 8px; display: flex; align-items: center; margin-left: -2px; }

.canvas { position: relative; flex: 1; min-height: 0; background: #222b35; }
.drawing { position: absolute; inset: 0; width: 100%; height: 100%; }
.viewrow { position: relative; display: flex; justify-content: space-between; padding: 5px 5px 0 3px; line-height: 14px; color: #ccd0d4; }
.viewrow .ib { width: 16px; height: 14px; color: #fff; stroke-width: 2px; }
.viewcube { position: absolute; right: 12px; top: 31px; width: 106px; height: 104px; display: grid; grid-template-columns: 20px 1fr 20px; grid-template-rows: 17px 1fr 17px; place-items: center; color: #b6babf; font: bold 16px/17px "Liberation Sans", sans-serif; }
.viewcube::before { content: ""; position: absolute; inset: 6px 7px; border: 9px solid #434a54; border-radius: 50%; }
.viewcube b, .viewcube button { position: relative; }
.n, .s { grid-column: 1 / -1; }
.top { width: 40px; height: 40px; background: #a9adaf; border: 6px solid #b9bcbc; color: #474d54; font: bold 10px/12px Roboto, sans-serif; }
.wcs { position: absolute; right: 46px; top: 151px; width: 38px; height: 13px; border-radius: 4px; background: #a3a8b2; color: #5c646e; text-align: left; padding-left: 4px; font: 9px/13px "Liberation Sans", sans-serif; }
.navbar { position: absolute; right: 3px; top: 185px; width: 26px; height: 200px; stroke: #3f464e; }

.dialog { position: absolute; background: #f1f1f1; color: #1c1c1c; font: 9px/12px Roboto, "Liberation Sans", sans-serif; box-shadow: 0 0 2px #000; }
.styles { left: 146px; top: 27px; width: 415px; }
.newstyle { left: 592px; top: 29px; width: 474px; }
.dtitle { display: flex; align-items: center; gap: 4px; height: 25px; padding: 0 2px 0 7px; background: #fff; font: 10px/14px "Noto Sans", sans-serif; }
.dtitle h2 { flex: 1; }
.muted { color: #8b8b8b; }
.dtitle .i12 { height: 10px; }
.sbody { display: grid; grid-template-columns: 135px 1fr 59px; column-gap: 12px; padding: 10px 10px 11px 9px; }
.sbody > .preview, .sbody > .span2 { margin-left: 2px; }
.line { line-height: 15px; display: block; }
.full { grid-column: 1 / -1; }
.span2 { grid-column: span 2; }
.leftcol { display: flex; flex-direction: column; }
.listbox { height: 145px; background: #fff; border: 1px solid #828790; padding: 2px 6px; }
.leftcol .line { margin: 2px 0; }
.sel { display: flex; align-items: center; height: 17px; background: #e3e3e3; border: 1px solid #adadad; padding: 0 3px; }
.sel > svg { color: #444; }
.preview { background: #222b35; border: 1px solid #8b8e92; border-right-color: #fff; border-bottom-color: #fff; }
.sbody .preview { height: 178px; padding: 31px 3px 0 4px; }
.mini { width: 100%; border-collapse: collapse; table-layout: fixed; color: #ee2318; font: 8px/10px "Liberation Sans", sans-serif; -webkit-text-stroke: 0.5px #ee2318; text-align: center; }
.mini th, .mini td { border: 1px solid #c92a20; padding: 0; height: 11px; font-weight: normal; }
.mini .t { font-size: 10px; height: 14px; }
.btncol { display: flex; flex-direction: column; gap: 8px; }
.btn { height: 17px; width: 59px; background: #e1e1e1; border: 1px solid #adadad; text-align: center; line-height: 15px; }
.btn:disabled { background: #cacaca; color: #8e8e8e; }
.sfoot { grid-column: 1 / -1; display: flex; justify-content: flex-end; gap: 11px; margin-top: 12px; }

.nbody { display: grid; grid-template-columns: 206px 1fr; column-gap: 7px; padding: 8px 8px 0 7px; }
fieldset { margin: 0; padding: 0; min-width: 0; border: 1px solid #dcdcdc; }
legend { padding: 0 2px; margin-left: 3px; line-height: 12px; }
.ncol { display: flex; flex-direction: column; }
.row { display: flex; align-items: center; }
.starting { height: 39px; }
.starting .row { padding: 2px 7px 0; gap: 6px; }
.sq { display: grid; place-items: center; width: 19px; height: 19px; background: #e4e4e4; border: 1px solid #adadad; }
.sq.off { background: #c8c8c8; }
.general { height: 51px; margin-top: 5px; }
.general .row { padding: 2px 5px 0 7px; }
.dir { width: 86px; }
.ncol .preview { height: 190px; margin-top: 7px; padding: 70px 4px 0; }
.maxi { width: 100%; border-collapse: collapse; table-layout: fixed; font: 15px/18px "Liberation Sans", sans-serif; text-align: center; }
.maxi th { border: 1px solid #c93a20; padding: 0; height: 21px; font-weight: normal; background: #7fe500; color: #b4a81a; -webkit-text-stroke: 1px #b8561a; }
.maxi .t { background: #9b9b9b; color: #b0706c; -webkit-text-stroke-color: #e0342c; }
.maxi td { background: #f31c0d; height: 6px; padding: 0; }
.cells { height: 293px; padding: 2px 11px 0 3px; }
.cells > legend { margin-left: 0; }
.pickrow { gap: 6px; }
.focus { width: 137px; height: 18px; background: #cce8ff; border-color: #0f5f9e; margin-right: 2px; padding: 0 2px 0 1px; gap: 4px; }
.focus select { border: 1px dotted #333; height: 14px; }
.dtabs { display: flex; align-items: flex-end; height: 20px; padding-left: 1px; }
.dtabs button { height: 15px; padding: 0 3px; border: 1px solid #dcdcdc; border-bottom: 0; }
.dtabs button:nth-child(2) { padding-right: 9px; }
.dtabs .on { height: 17px; background: #fff; padding: 0 4px; }
.page { background: #fff; border: 1px solid #dcdcdc; height: 182px; padding: 2px 5px 0 6px; }
.props { height: 174px; padding: 0 9px 0 6px; }
.form { display: grid; grid-template-columns: 1fr 95px; gap: 4px; align-items: center; }
.sample { width: 33px; height: 1px; background: #222; margin: 0 5px 0 2px; }
.chip { width: 9px; height: 9px; border: 1px solid #222; background: #fff; margin-right: 3px; }
.props .sel { padding-right: 1px; }
.checkrow { display: flex; align-items: center; gap: 3px; height: 16px; }
.checkrow input { appearance: none; width: 10px; height: 10px; border: 1px solid #333; background: #fff; }
.num { height: 18px; border: 1px solid #ccc; padding: 0 2px; color: #808080; background: #fff; }
.borders { display: flex; gap: 6px; padding: 9px 0 7px 3px; }
.b { width: 12px; height: 12px; stroke-width: 1px; } .g { stroke: #b3b3b3; }
.hint { line-height: 11px; }
.cprev { height: 51px; padding: 2px 4px 0; margin-right: -4px; margin-top: 1px; }
.cprev legend { margin-left: 0; }
.cprev .preview { height: 34px; display: grid; place-items: center; }
.cellpic { width: 32px; height: 28px; }
.nfoot { display: flex; justify-content: flex-end; gap: 7px; padding: 7px 9px 4px; }
.nfoot .btn { height: 17px; }
.nfoot .primary { border: 2px solid #2a76a8; line-height: 13px; }

.cmdline { position: absolute; left: 259px; bottom: 1px; width: 764px; display: flex; align-items: center; }
.grip { width: 4px; height: 14px; stroke: #b0b4b8; }
.cmdbox { flex: 1; display: flex; align-items: center; gap: 2px; height: 20px; background: #bfc0c2; color: #4a4e54; padding: 0 3px; }
.cmdbox input { flex: 1; color: #222; font: 9px/12px "DejaVu Sans Mono", monospace; }
.up { transform: rotate(180deg); }

.status { position: relative; display: flex; justify-content: space-between; height: 24px; background: #262d39; border-top: 1px solid #343c48; padding: 0 2px 0 10px; }
.layouts { display: flex; height: 14px; line-height: 14px; color: #aeb3ba; }
.layouts a { padding: 0 8px; background: #2d3541; margin-right: 2px; clip-path: polygon(0 0, 100% 0, calc(100% - 4px) 100%, 4px 100%); }
.layouts .on { background: #3b4453; color: #fff; font-weight: bold; }
.layouts .add { width: 20px; padding: 3px 6px; }
.tools { display: flex; gap: 1px; padding: 1px 0 3px; }
.tools button { width: 19px; background: #343c4a; display: flex; align-items: center; justify-content: center; color: #d9dce0; }
.tools .c { width: 12px; } .tools .w { width: 21px; } .tools .m { width: 17px; }
.tools .model { width: 39px; } .tools .ratio { width: 26px; gap: 2px; }
.tools .act { background: #4f8ec8; color: #fff; }
.strip { position: absolute; left: 38px; bottom: 0; width: 275px; height: 1px; background: #e6e6e6; }

.marks { position: absolute; inset: 0; width: 100%; height: 100%; pointer-events: none; stroke: none; }
.slab, .han { fill: rgba(170, 176, 190, .16); stroke: rgba(115, 120, 130, .12); stroke-width: 2px; stroke-linejoin: round; text-anchor: middle; dominant-baseline: central; }
.slab { font: bold 50px "DejaVu Serif", serif; }
.han { font: 900 60px "Noto Sans CJK SC", sans-serif; }
.topmark { font: bold 49px "Noto Sans", sans-serif; fill: rgba(172, 176, 180, .6); text-anchor: middle; }
.botmark { font: bold 34px "Noto Sans CJK SC", sans-serif; fill: rgba(205, 207, 210, .55); stroke: rgba(120, 122, 126, .6); text-anchor: middle; }
.brand { position: absolute; right: 18px; bottom: 18px; display: flex; align-items: center; gap: 4px; color: #c5c8cb; font: 19px/22px Lato, sans-serif; pointer-events: none; }
.in { background: #c5c8cb; color: #262d39; line-height: 19px; padding: 0 2px; }
```
